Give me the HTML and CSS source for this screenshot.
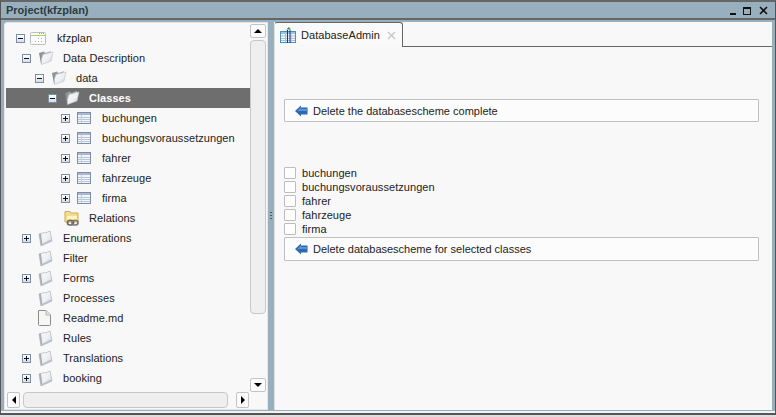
FILE: index.html
```html
<!DOCTYPE html>
<html lang="en">
<head>
<meta charset="utf-8">
<title>Project(kfzplan)</title>
<link rel="stylesheet" href="styles.css">
</head>
<body>
<svg class="defs" width="0" height="0" aria-hidden="true">
  <defs>
    <linearGradient id="fold" x1="0" y1="0" x2="1" y2="1">
      <stop offset="0" stop-color="#f8f9fa"/>
      <stop offset=".55" stop-color="#eef0f3"/>
      <stop offset="1" stop-color="#c6ccd4"/>
    </linearGradient>
    <linearGradient id="foldback" x1="0" y1="0" x2="1" y2="0">
      <stop offset="0" stop-color="#85898d"/>
      <stop offset="1" stop-color="#bfc2c6"/>
    </linearGradient>
    <symbol id="i-folder" viewBox="0 0 16 16">
      <path d="M1 4 6.500 2.500 7.500 3 12 1 14 11 3 16Z" fill="url(#fold)" stroke="#b6bbc1" stroke-width=".8"/>
      <path d="M1 4 3 3.500 4.500 15.300 3 16Z" fill="#a9aeb5"/>
      <path d="M3 16 14 11 13.600 9.300 3.700 14Z" fill="#b9c0c9"/>
    </symbol>
    <symbol id="i-folder-open" viewBox="0 0 16 16">
      <path d="M1 3 6 1.500 7.500 3 13 1 12 11 3 14Z" fill="url(#foldback)"/>
      <path d="M5 4.500 15 2 13 11 3.500 14.500 3.500 9Z" fill="url(#fold)" stroke="#bcc1c7" stroke-width=".6"/>
    </symbol>
    <symbol id="i-table" viewBox="0 0 14 12">
      <rect x=".5" y=".5" width="13" height="11" fill="#f1f5fa" stroke="#7f8fa8"/>
      <rect x="1" y="1" width="12" height="2" fill="#a9b8ce"/>
      <path d="M1 5.500h12M1 7.500h12M1 9.500h12" stroke="#bcc8da"/>
      <path d="M4.500 3v8" stroke="#c6cfdc"/>
    </symbol>
    <symbol id="i-arrow" viewBox="0 0 13 12">
      <path d="M0 6 6 .5V2.500H12.500V9.500H6V11.500Z" fill="#2f69b0"/>
      <path d="M2 6 6 2.500V4H12.500V6Z" fill="#5b93d6"/>
    </symbol>
  </defs>
</svg>
<div class="window">
  <header class="titlebar">
    <span class="title">Project(kfzplan)</span>
    <div class="win-buttons">
      <span class="win-min"></span>
      <span class="win-max"></span>
      <svg class="win-close" width="9" height="9" viewBox="0 0 9 9"><path d="M1 1 8 8M8 1 1 8" stroke="#111" stroke-width="1.600"/></svg>
    </div>
  </header>
  <main class="body">
    <section class="left">
      <div class="tree">
        <div class="row lvl-0"><span class="exp minus"></span>
          <svg class="icon icon-root" width="17" height="13" viewBox="0 0 17 13"><rect x=".5" y=".5" width="15" height="12" rx="1" fill="#fbfbfb" stroke="#bdbdbd"/><path d="M1 3.500h14" stroke="#a6d45c"/><path d="M9 1.500h1M11 1.500h1M13 1.500h1" stroke="#999"/><path d="M8 6.500h1M11 6.500h1M8 9.500h1M11 9.500h1M5 9.500h1" stroke="#aaa"/></svg>
          <span class="label">kfzplan</span></div>
        <div class="row lvl-1"><span class="exp minus"></span><svg class="icon"><use href="#i-folder-open"/></svg><span class="label">Data Description</span></div>
        <div class="row lvl-2"><span class="exp minus"></span><svg class="icon"><use href="#i-folder-open"/></svg><span class="label">data</span></div>
        <div class="row lvl-3 selected"><span class="exp minus"></span><svg class="icon"><use href="#i-folder-open"/></svg><span class="label">Classes</span></div>
        <div class="row lvl-4"><span class="exp plus"></span><svg class="icon icon-table"><use href="#i-table"/></svg><span class="label">buchungen</span></div>
        <div class="row lvl-4"><span class="exp plus"></span><svg class="icon icon-table"><use href="#i-table"/></svg><span class="label">buchungsvoraussetzungen</span></div>
        <div class="row lvl-4"><span class="exp plus"></span><svg class="icon icon-table"><use href="#i-table"/></svg><span class="label">fahrer</span></div>
        <div class="row lvl-4"><span class="exp plus"></span><svg class="icon icon-table"><use href="#i-table"/></svg><span class="label">fahrzeuge</span></div>
        <div class="row lvl-4"><span class="exp plus"></span><svg class="icon icon-table"><use href="#i-table"/></svg><span class="label">firma</span></div>
        <div class="row lvl-3"><span class="exp none"></span>
          <svg class="icon" viewBox="0 0 16 16"><path d="M1 1.500h5l1 1.500h7V12H1Z" fill="#f6dc8e" stroke="#d3ab4c"/><path d="M3 6h10v3H3Z" fill="#fff3c6"/><rect x="3.500" y="10.500" width="6" height="4.500" rx="2.200" fill="none" stroke="#666" stroke-width="1.700"/><rect x="8" y="10.500" width="6" height="4.500" rx="2.200" fill="none" stroke="#777" stroke-width="1.700"/></svg>
          <span class="label">Relations</span></div>
        <div class="row lvl-1"><span class="exp plus"></span><svg class="icon"><use href="#i-folder"/></svg><span class="label">Enumerations</span></div>
        <div class="row lvl-1"><span class="exp none"></span><svg class="icon"><use href="#i-folder"/></svg><span class="label">Filter</span></div>
        <div class="row lvl-1"><span class="exp plus"></span><svg class="icon"><use href="#i-folder"/></svg><span class="label">Forms</span></div>
        <div class="row lvl-1"><span class="exp none"></span><svg class="icon"><use href="#i-folder"/></svg><span class="label">Processes</span></div>
        <div class="row lvl-1"><span class="exp none"></span>
          <svg class="icon" viewBox="0 0 16 16"><path d="M.5 .5H8L12.500 5V14.500Q12.500 15.500 11.500 15.500H1.500Q.5 15.500 .5 14.500Z" fill="#f6f6f4" stroke="#8c8c8c"/><path d="M8 .5V5H12.500" fill="#e6e6e6" stroke="#b5b5b5"/></svg>
          <span class="label">Readme.md</span></div>
        <div class="row lvl-1"><span class="exp none"></span><svg class="icon"><use href="#i-folder"/></svg><span class="label">Rules</span></div>
        <div class="row lvl-1"><span class="exp plus"></span><svg class="icon"><use href="#i-folder"/></svg><span class="label">Translations</span></div>
        <div class="row lvl-1"><span class="exp plus"></span><svg class="icon"><use href="#i-folder"/></svg><span class="label">booking</span></div>
        <div class="row lvl-1"><span class="exp none"></span><svg class="icon"><use href="#i-folder"/></svg></div>
      </div>
      <div class="vscroll">
        <span class="sbtn"><i class="tri tri-up"></i></span>
        <span class="vthumb"></span>
        <span class="sbtn sbtn-down"><i class="tri tri-down"></i></span>
      </div>
      <div class="hscroll">
        <span class="sbtn sbtn-h"><i class="tri tri-left"></i></span>
        <span class="hthumb"></span>
        <span class="sbtn sbtn-h"><i class="tri tri-right"></i></span>
      </div>
    </section>
    <div class="splitter"><span class="grip"></span></div>
    <section class="right">
      <div class="tabbar">
        <div class="tab">
          <svg class="tab-icon" width="17" height="17" viewBox="0 0 17 17"><rect x=".5" y="4.500" width="15" height="11" fill="#f4f9fd" stroke="#4a90c4"/><rect x="1" y="5" width="14" height="2" fill="#9cc4e2"/><path d="M1 9h14M1 11.500h14M1 13.500h14M5.500 5v10M11 5v10" stroke="#9cc4e2"/><path d="M7.500 3v13M10 3v13" stroke="#2b2b7a"/><path d="M8.800 0 11 2.500H6.500Z" fill="#2f8f3a"/></svg>
          <span class="tab-label">DatabaseAdmin</span>
          <svg class="tab-close" width="9" height="9" viewBox="0 0 9 9"><path d="M1 1 8 8M8 1 1 8" stroke="#c4c4c4" stroke-width="1.200"/></svg>
        </div>
        <div class="tab-rest"></div>
      </div>
      <div class="content">
        <button class="action first"><svg class="arrow"><use href="#i-arrow"/></svg><span>Delete the databasescheme complete</span></button>
        <ul class="checks">
          <li><span class="box"></span>buchungen</li>
          <li><span class="box"></span>buchungsvoraussetzungen</li>
          <li><span class="box"></span>fahrer</li>
          <li><span class="box"></span>fahrzeuge</li>
          <li><span class="box"></span>firma</li>
        </ul>
        <button class="action second"><svg class="arrow"><use href="#i-arrow"/></svg><span>Delete databasescheme for selected classes</span></button>
      </div>
    </section>
  </main>
</div>
</body>
</html>
```
FILE: styles.css
```css
* { box-sizing: border-box; }
html, body { margin: 0; padding: 0; }
body {
  width: 776px;
  height: 417px;
  overflow: hidden;
  background: #dedede;
  font-family: "Liberation Sans", Arial, sans-serif;
  font-size: 11px;
  color: #222;
}
.defs { position: absolute; }
.window {
  width: 776px;
  height: 415px;
  display: flex;
  flex-direction: column;
  background: #98b0bd;
  border-top: 2px solid #666;
  border-left: 1px solid #555;
  border-right: 1px solid #555;
  border-bottom: 2px solid #555;
}
.titlebar {
  height: 16px;
  flex: none;
  display: flex;
  align-items: center;
  justify-content: space-between;
  padding-left: 5px;
}
.title {
  font-size: 11px;
  font-weight: bold;
  color: #2c3a42;
}
.win-buttons {
  display: flex;
  align-items: flex-end;
  gap: 7px;
  padding-right: 7px;
  height: 12px;
}
.win-min { width: 6px; height: 2px; background: #111; margin-bottom: 1px; }
.win-max { width: 8px; height: 8px; border: 1px solid #111; border-top-width: 2px; margin-bottom: 1px; }
.win-close { margin-bottom: 1px; margin-left: 1px; }
.body {
  flex: 1;
  min-height: 0;
  display: flex;
  border-top: 2px solid #666;
  border-bottom: 2px solid #f2f2f2;
  padding: 2px 3px 1px 3px;
}
.left {
  width: 264px;
  flex: none;
  position: relative;
  background: #f8f8f8;
  border: 1px solid #e6e6e6;
  border-radius: 3px 0 0 0;
  overflow: hidden;
}
.tree {
  height: 368px;
  padding: 5px 17px 0 1px;
  overflow: hidden;
}
.row {
  height: 20px;
  display: flex;
  align-items: center;
  white-space: nowrap;
}
.lvl-0 { padding-left: 10px; }
.lvl-1 { padding-left: 16px; }
.lvl-2 { padding-left: 29px; }
.lvl-3 { padding-left: 42px; }
.lvl-4 { padding-left: 55px; }
.selected { background: #6e6e6e; color: #fff; font-weight: bold; }
.exp {
  width: 9px;
  height: 9px;
  flex: none;
  margin-right: 7px;
  position: relative;
  border: 1px solid #7a8ea8;
  background: linear-gradient(#ffffff, #d8dde4);
}
.lvl-0 .exp { margin-right: 5px; }
.exp::before {
  content: "";
  position: absolute;
  left: 1px;
  top: 3px;
  width: 5px;
  height: 1px;
  background: #111;
}
.plus::after {
  content: "";
  position: absolute;
  left: 3px;
  top: 1px;
  width: 1px;
  height: 5px;
  background: #111;
}
.none { visibility: hidden; }
.icon {
  width: 16px;
  height: 16px;
  flex: none;
  margin-right: 9px;
}
.icon-root { width: 17px; height: 13px; margin-right: 10px; }
.icon-table { width: 14px; height: 12px; margin-right: 11px; }
.label { letter-spacing: .05px; }
.vscroll {
  position: absolute;
  top: 1px;
  right: 1px;
  bottom: 17px;
  width: 16px;
  display: flex;
  flex-direction: column;
  background: #f8f8f8;
}
.sbtn {
  width: 16px;
  height: 14px;
  flex: none;
  display: flex;
  align-items: center;
  justify-content: center;
  background: #fcfcfc;
  border: 1px solid #c4c4c4;
  border-radius: 2px;
}
.sbtn-h { width: 13px; height: 16px; }
.tri { display: block; width: 0; height: 0; border-style: solid; border-color: transparent; }
.tri-up { border-width: 0 4px 4px 4px; border-bottom-color: #000; }
.tri-down { border-width: 4px 4px 0 4px; border-top-color: #000; }
.tri-left { border-width: 4px 4px 4px 0; border-right-color: #000; }
.tri-right { border-width: 4px 0 4px 4px; border-left-color: #000; }
.vthumb {
  display: block;
  height: 274px;
  margin-top: 2px;
  background: #efefef;
  border: 1px solid #c8c8c8;
  border-radius: 4px;
}
.sbtn-down { margin-top: auto; }
.hscroll {
  position: absolute;
  left: 2px;
  right: 18px;
  bottom: 1px;
  height: 16px;
  display: flex;
  justify-content: space-between;
  background: #f8f8f8;
}
.hthumb {
  display: block;
  width: 205px;
  margin: 0 auto 0 3px;
  background: #efefef;
  border: 1px solid #c8c8c8;
  border-radius: 4px;
}
.splitter {
  width: 6px;
  flex: none;
  display: flex;
  align-items: center;
  justify-content: center;
  background: #98b0bd;
}
.grip {
  width: 2px;
  height: 8px;
  background: repeating-linear-gradient(#4a5a64 0 1px, transparent 1px 3px);
}
.right {
  flex: 1;
  min-width: 0;
  display: flex;
  flex-direction: column;
  background: #f8f8f8;
}
.tabbar { height: 25px; flex: none; display: flex; }
.tab {
  width: 129px;
  height: 25px;
  flex: none;
  display: flex;
  align-items: center;
  padding: 0 0 0 5px;
  background: #fafafa;
  border: 1px solid #666;
  border-left-color: #e0e0e0;
  border-bottom: none;
  border-radius: 3px 3px 0 0;
}
.tab-label { margin-left: 4px; font-size: 11px; letter-spacing: .05px; }
.tab-close { margin-left: 7px; }
.tab-rest { flex: 1; border-bottom: 1px solid #666; }
.content {
  flex: 1;
  padding: 52px 13px 0 9px;
  border-left: 1px solid #e0e0e0;
}
.action {
  width: 475px;
  height: 23px;
  display: flex;
  align-items: center;
  padding: 0 0 0 10px;
  background: #fcfcfc;
  border: 1px solid #c0c0c0;
  border-radius: 1px;
  font: inherit;
  color: #222;
}
.second { height: 24px; margin-top: 1px; }
.arrow { width: 13px; height: 12px; margin-right: 5px; flex: none; }
.checks {
  list-style: none;
  margin: 44px 0 0;
  padding: 0;
}
.checks li {
  height: 14px;
  display: flex;
  align-items: center;
  letter-spacing: .05px;
}
.box {
  width: 12px;
  height: 12px;
  margin: 0 6px 0 0;
  background: #fff;
  border: 1px solid #bdbdbd;
  border-radius: 1px;
}
```
